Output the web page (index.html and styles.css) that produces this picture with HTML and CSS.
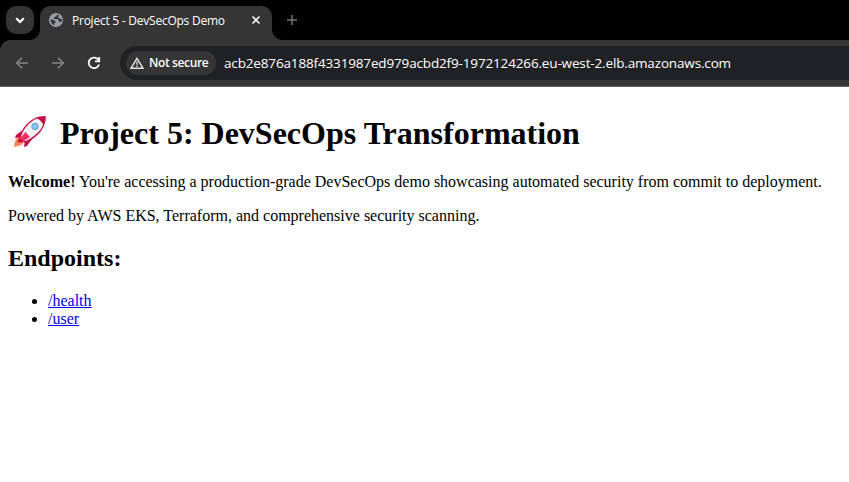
FILE: index.html
```html
<!DOCTYPE html>
<html lang="en">
<head>
<meta charset="utf-8">
<title>Project 5 - DevSecOps Demo</title>
<link rel="stylesheet" href="styles.css">
</head>
<body>
<header class="tabstrip">
  <button class="tab-search" aria-label="Search tabs">
    <svg width="28" height="28" viewBox="0 0 28 28"><path d="M10.2 12.2 14 16l3.8-3.8" fill="none" stroke="#fff" stroke-width="2"/></svg>
  </button>
  <div class="tab">
    <svg class="favicon" width="14" height="14" viewBox="0 0 14 14"><circle cx="7" cy="7" r="7" fill="#9aa0a6"/><path d="M1.6 6.2 5 7.2q1.6.3 1.5 1.6v1l-1.2.7v1.8Q1.4 10.6 1.6 6.2ZM7.8 1.5v1.2q-.1.8-1 .8H5.6v1.2l-1 .6v.8h3.8l1.4 1.5v1.2h1.3l.8.8q1.2-1.5 1.1-3.3l-1.6-.2-1.2-1.3H8.8V4l1-.6V2Z" fill="#353535"/></svg>
    <span class="tab-title">Project 5 - DevSecOps Demo</span>
    <svg class="close" width="10" height="10" viewBox="0 0 10 10"><path d="m1.5 1.5 7 7m0-7-7 7" stroke="#f2f2f2" stroke-width="1.6"/></svg>
  </div>
  <svg class="new-tab" width="12" height="12" viewBox="0 0 12 12"><path d="M6 1v10M1 6h10" stroke="#757575" stroke-width="1.5"/></svg>
</header>
<nav class="toolbar">
  <svg class="nav-icon" width="16" height="16" viewBox="0 0 16 16"><path d="M14 8H3M8 2.7 2.7 8 8 13.3" fill="none" stroke="#858585" stroke-width="1.5"/></svg>
  <svg class="nav-icon" width="16" height="16" viewBox="0 0 16 16"><path d="M2 8h11M8 2.7 13.3 8 8 13.3" fill="none" stroke="#858585" stroke-width="1.5"/></svg>
  <svg class="nav-icon" width="16" height="16" viewBox="0 0 16 16"><path d="M12.7 5.3A5.3 5.3 0 1 0 13.1 9.5M13.2 2v4.3H9" fill="none" stroke="#fff" stroke-width="1.8"/></svg>
  <div class="address">
    <div class="security">
      <svg width="14" height="12" viewBox="0 0 14 12"><path d="M7 1.3 13 11.3H1Z" fill="none" stroke="#e3e3e3" stroke-width="1.4"/><path d="M7 4.5v3.2M7 8.6v1.3" stroke="#e3e3e3" stroke-width="1.3"/></svg>
      <span class="security-label">Not secure</span>
    </div>
    <span class="url">acb2e876a188f4331987ed979acbd2f9-1972124266.eu-west-2.elb.amazonaws.com</span>
  </div>
</nav>
<main>
  <h1><svg class="rocket" width="34" height="34" viewBox="0 0 34 34" role="img" aria-label="Rocket">
    <path d="M6 22Q2 23 1 32q8-1 10-5Z" fill="#ff8357"/>
    <path d="M10 15 3 20l-1 3 8-1ZM19 24l-5 7-3 1 1-8Z" fill="#c40d45"/>
    <path d="M7 22Q10 12 19 5.500 25 1 32 2q0 7-4 13-6 8-16 12Z" fill="#f2f1f3" stroke="#c40d45" stroke-width="1.3"/>
    <path d="M23.500 3Q28 1 32.500 1.500 33 6 30.500 10 28 5 23.500 3Z" fill="#c40d45"/>
    <path d="M12.500 17 17 22 9 27 6 24.500Z" fill="#f92f60"/>
    <path d="m6 23-1.500 4.500L11 27" fill="#c40d45"/>
    <circle cx="22" cy="11.500" r="3.200" fill="#83cbff" stroke="#6f99ad" stroke-width="1"/>
  </svg><span>Project 5: DevSecOps Transformation</span></h1>
  <p><strong>Welcome!</strong> You're accessing a production-grade DevSecOps demo showcasing automated security from commit to deployment.</p>
  <p>Powered by AWS EKS, Terraform, and comprehensive security scanning.</p>
  <h2>Endpoints:</h2>
  <ul>
    <li><a href="#health">/health</a></li>
    <li><a href="#user">/user</a></li>
  </ul>
</main>
</body>
</html>
```
FILE: styles.css
```css
* { box-sizing: border-box; }
body {
  margin: 0;
  background: #fff;
  color: #000;
  font: 16px/18px "Liberation Serif", serif;
  overflow: hidden;
}
svg { display: block; flex: none; }
.tabstrip, .toolbar {
  display: flex;
  align-items: center;
  background: #000;
  font-family: "Open Sans", sans-serif;
  white-space: nowrap;
}
.tabstrip { height: 40px; padding-left: 6px; }
.tab-search {
  width: 28px;
  height: 28px;
  padding: 0;
  border: 0;
  border-radius: 10px;
  background: #353535;
}
.tab {
  position: relative;
  display: flex;
  align-items: center;
  align-self: flex-end;
  width: 232px;
  height: 34px;
  margin-left: 6px;
  padding: 0 11px 6px 9px;
  border-radius: 10px 10px 0 0;
  background: #353535;
}
.tab::before, .tab::after {
  content: "";
  position: absolute;
  bottom: 0;
  width: 10px;
  height: 10px;
}
.tab::before { left: -10px; background: radial-gradient(circle at 0 0, transparent 9.5px, #353535 10px); }
.tab::after { right: -10px; background: radial-gradient(circle at 100% 0, transparent 9.5px, #353535 10px); }
.tab-title {
  margin-left: 9px;
  padding-top: 1px;
  color: #fff;
  font-size: 12px;
  letter-spacing: -0.24px;
}
.close { margin-left: auto; }
.new-tab { margin-left: 14px; }
.toolbar {
  height: 47px;
  padding-left: 14px;
  border-bottom: 1px solid #616161;
  background: linear-gradient(#353535, #353535) 0 10px no-repeat, radial-gradient(circle at 10px 10px, #353535 9.5px, #000 10px) 0 0 / 10px 10px no-repeat, linear-gradient(#353535, #353535) 10px 0 no-repeat;
}
.nav-icon { margin-right: 20px; }
.address {
  display: flex;
  align-items: center;
  flex: 1;
  height: 34px;
  margin-left: -2px;
  padding-left: 6px;
  border-radius: 17px 0 0 17px;
  background: #202124;
}
.security {
  display: flex;
  align-items: center;
  width: 90px;
  height: 24px;
  padding-left: 4px;
  border-radius: 12px;
  background: #353535;
}
.security-label {
  margin-left: 5px;
  color: #fff;
  font-size: 12px;
  font-weight: 600;
  letter-spacing: -0.38px;
}
.url {
  margin-left: 8px;
  color: #fff;
  font-size: 13.500px;
  letter-spacing: -0.15px;
}
main { padding: 21px 8px 0; }
h1 {
  display: flex;
  align-items: center;
  height: 43px;
  margin: 0 0 22px;
  font-size: 32px;
  line-height: 37px;
}
.rocket { margin: 4px 13px 0 5px; }
h1 span { padding-top: 7px; }
p { margin: 0 0 16px; }
h2 {
  margin: 20px 0;
  font-size: 24px;
  line-height: 27px;
}
ul { margin: 0; padding-left: 40px; }
a { color: #0000ee; }
```
